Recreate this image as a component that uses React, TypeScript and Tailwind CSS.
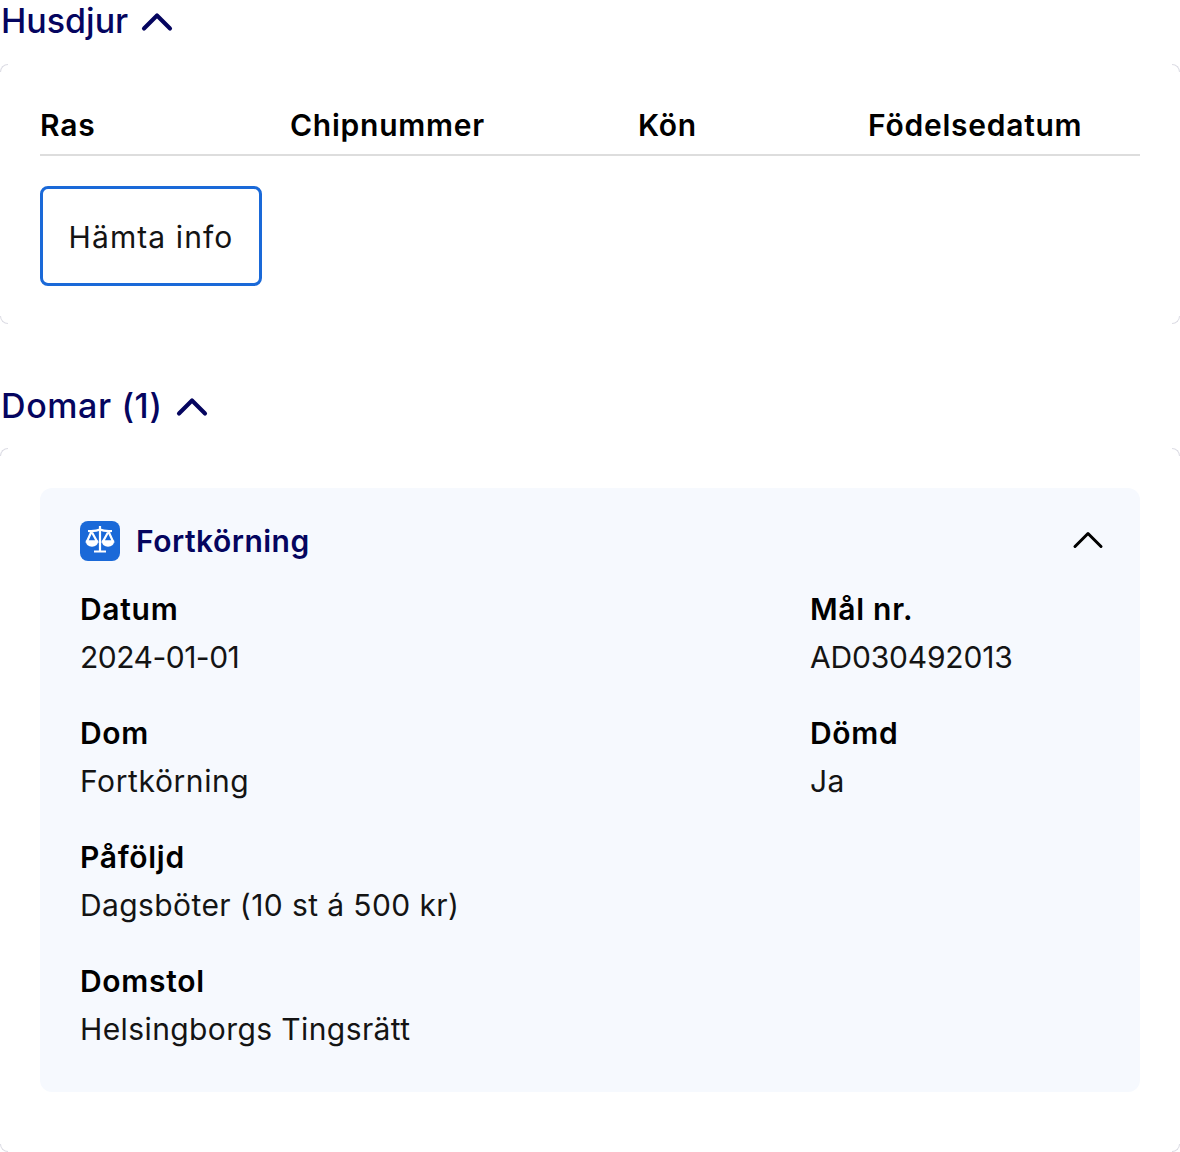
import { ChevronUp } from "lucide-react";

const font = "font-['Inter','Noto_Sans',sans-serif]";

function SectionTitle({ title, track }: { title: string; track: string }) {
  return (
    <button type="button" className={`flex h-10 items-center gap-[3px] pl-px text-[34px] font-medium text-[#05055f] ${track}`}>
      {title}
      <ChevronUp size={52} strokeWidth={1.9} className="translate-y-[2px]" />
    </button>
  );
}

function Field({ label, value, track = "tracking-[0.4px]" }: { label: string; value: string; track?: string }) {
  return (
    <div>
      <div className="text-[30px] leading-12 font-semibold tracking-[0.7px] text-black">{label}</div>
      <div className={`text-[30px] leading-12 text-[#141414] ${track}`}>{value}</div>
    </div>
  );
}

function ScaleIcon() {
  return (
    <span className="flex h-10 w-10 items-center justify-center rounded-lg bg-[#1a69d8]">
      <svg width="30" height="30" viewBox="0 0 30 30" fill="none" stroke="white" strokeWidth="2.2" className="-translate-y-px">
        <path d="M15 1v25M9 26.500h12M3 6c4 0 8 .5 12-1.500c4 2 8 1.500 12 1.500M6.500 6.500L2 16.500h10L6.500 6.500M23.500 6.500L18 16.500h10l-4.500-10" />
        <path d="M2 16.500c.5 5.500 9.500 5.500 10 0zM18 16.500c.5 5.500 9.500 5.500 10 0z" fill="white" />
      </svg>
    </span>
  );
}

// the card's outline only shows at its rounded corners in the picture
function Corners() {
  return (
    <>
      <span className="absolute top-0 left-0 h-2 w-2 rounded-tl-lg border-t border-l border-[#dcdce4]" />
      <span className="absolute top-0 right-0 h-2 w-2 rounded-tr-lg border-t border-r border-[#dcdce4]" />
      <span className="absolute bottom-0 left-0 h-2 w-2 rounded-bl-lg border-b border-l border-[#dcdce4]" />
      <span className="absolute right-0 bottom-0 h-2 w-2 rounded-br-lg border-r border-b border-[#dcdce4]" />
    </>
  );
}

export default function App() {
  return (
    <div className={`h-[1152px] w-[1180px] overflow-hidden bg-white ${font}`}>
      <SectionTitle title="Husdjur" track="tracking-[0px]" />
      <section className="relative mt-6 h-[260px] px-10 pt-[41px]">
        <Corners />
        <div className="grid h-[51px] grid-cols-[250px_348px_230px_1fr] border-b-2 border-[#dddddd] text-[30px] leading-10 font-semibold tracking-[0.75px] text-black">
          <div>Ras</div>
          <div>Chipnummer</div>
          <div>Kön</div>
          <div>Födelsedatum</div>
        </div>
        <button type="button" className="mt-[30px] h-[100px] w-[222px] rounded-lg border-[3px] border-[#1a69d8] pt-[3px] text-[30px] tracking-[1.1px] text-[#141414]">
          Hämta info
        </button>
      </section>

      <div className="mt-[61px]">
        <SectionTitle title="Domar (1)" track="tracking-[0.6px]" />
      </div>
      <section className="relative mt-[23px] h-[704px] px-10 pt-10">
        <Corners />
        <div className="h-[604px] rounded-xl bg-[#f6f9fe] px-10 pt-[33px]">
          <div className="flex h-10 items-center gap-4">
            <ScaleIcon />
            <span className="flex-1 text-[30px] font-semibold tracking-[0.5px] text-[#05055f]">Fortkörning</span>
            <ChevronUp size={52} strokeWidth={1.4} className="-mr-[14px] -translate-y-px text-black" />
          </div>
          <div className="mt-6 grid grid-cols-[730px_1fr] gap-y-[28px]">
            <Field label="Datum" value="2024-01-01" track="tracking-[-0.5px]" />
            <Field label="Mål nr." value="AD030492013" track="tracking-[-0.2px]" />
            <Field label="Dom" value="Fortkörning" track="tracking-[0.6px]" />
            <Field label="Dömd" value="Ja" />
            <div className="col-span-2"><Field label="Påföljd" value="Dagsböter (10 st á 500 kr)" /></div>
            <div className="col-span-2"><Field label="Domstol" value="Helsingborgs Tingsrätt" /></div>
          </div>
        </div>
      </section>
    </div>
  );
}
